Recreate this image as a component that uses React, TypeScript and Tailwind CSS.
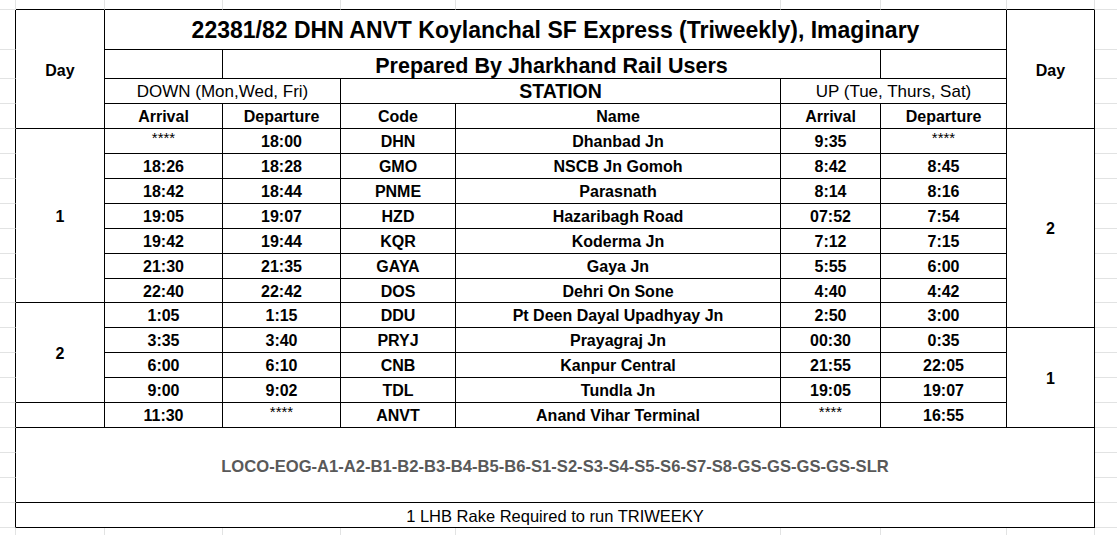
import React from 'react';

type Stop = {
  downArr: string;
  downDep: string;
  code: string;
  name: string;
  upArr: string;
  upDep: string;
};

const stops: Stop[] = [
  { downArr: '****', downDep: '18:00', code: 'DHN', name: 'Dhanbad Jn', upArr: '9:35', upDep: '****' },
  { downArr: '18:26', downDep: '18:28', code: 'GMO', name: 'NSCB Jn Gomoh', upArr: '8:42', upDep: '8:45' },
  { downArr: '18:42', downDep: '18:44', code: 'PNME', name: 'Parasnath', upArr: '8:14', upDep: '8:16' },
  { downArr: '19:05', downDep: '19:07', code: 'HZD', name: 'Hazaribagh Road', upArr: '07:52', upDep: '7:54' },
  { downArr: '19:42', downDep: '19:44', code: 'KQR', name: 'Koderma Jn', upArr: '7:12', upDep: '7:15' },
  { downArr: '21:30', downDep: '21:35', code: 'GAYA', name: 'Gaya Jn', upArr: '5:55', upDep: '6:00' },
  { downArr: '22:40', downDep: '22:42', code: 'DOS', name: 'Dehri On Sone', upArr: '4:40', upDep: '4:42' },
  { downArr: '1:05', downDep: '1:15', code: 'DDU', name: 'Pt Deen Dayal Upadhyay Jn', upArr: '2:50', upDep: '3:00' },
  { downArr: '3:35', downDep: '3:40', code: 'PRYJ', name: 'Prayagraj Jn', upArr: '00:30', upDep: '0:35' },
  { downArr: '6:00', downDep: '6:10', code: 'CNB', name: 'Kanpur Central', upArr: '21:55', upDep: '22:05' },
  { downArr: '9:00', downDep: '9:02', code: 'TDL', name: 'Tundla Jn', upArr: '19:05', upDep: '19:07' },
  { downArr: '11:30', downDep: '****', code: 'ANVT', name: 'Anand Vihar Terminal', upArr: '****', upDep: '16:55' },
];

const cell = 'flex items-center justify-center border-r border-b border-black bg-white';
const stripL = 'border-r border-b border-r-black border-b-[#e2e3e3]';
const stripR = 'border-b border-[#e2e3e3]';

function Cell({ className = 'pt-[2px]', children }: { className?: string; children?: React.ReactNode }) {
  return <div className={`${cell} ${className}`}>{children}</div>;
}

function Time({ value }: { value: string }) {
  if (value === '****') {
    return <span className="font-normal text-[15px] leading-none -mt-[9px]">****</span>;
  }
  return <span>{value}</span>;
}

export default function App() {
  return (
    <div className="h-[535px] w-full bg-white font-['Liberation_Sans',Arial,sans-serif] text-black text-[16px] font-bold overflow-hidden">
      <div className="grid h-full grid-cols-[16px_89px_118px_118px_115px_325px_100px_126px_88px_1fr] grid-rows-[10px_40px_29px_25px_25px_25px_25px_25px_25px_25px_25px_24px_25px_25px_25px_25px_25px_25px_25px_25px_25px_1fr]">
        {/* top strip of the sheet */}
        <div className="border-r border-b border-[#e2e3e3]" />
        {[0, 1, 2, 3, 4, 5, 6, 7].map((i) => (
          <div key={i} className="border-r border-b border-r-[#e2e3e3] border-b-black" />
        ))}
        <div className="border-b border-[#e2e3e3]" />

        {/* title row */}
        <div className={stripL} />
        <Cell className="row-span-4 pt-[3px]">Day</Cell>
        <Cell className="col-span-6 text-[23px] pt-[2px]">22381/82 DHN ANVT Koylanchal SF Express (Triweekly), Imaginary</Cell>
        <Cell className="row-span-4 pt-[3px]">Day</Cell>
        <div className={stripR} />

        {/* prepared by */}
        <div className={stripL} />
        <Cell />
        <Cell className="col-span-4 text-[21.5px] pt-[4px]">Prepared By Jharkhand Rail Users</Cell>
        <Cell />
        <div className={stripR} />

        {/* direction row */}
        <div className={stripL} />
        <Cell className="col-span-2 font-normal text-[17px] pt-[2px]">DOWN (Mon,Wed, Fri)</Cell>
        <Cell className="col-span-2 text-[19.5px] pt-[2px]">STATION</Cell>
        <Cell className="col-span-2 font-normal text-[17px] pt-[2px]">UP (Tue, Thurs, Sat)</Cell>
        <div className={stripR} />

        {/* column headers */}
        <div className={stripL} />
        <Cell>Arrival</Cell>
        <Cell>Departure</Cell>
        <Cell>Code</Cell>
        <Cell>Name</Cell>
        <Cell>Arrival</Cell>
        <Cell>Departure</Cell>
        <div className={stripR} />

        {stops.map((s, i) => (
          <React.Fragment key={s.code}>
            <div className={stripL} />
            {i === 0 && <Cell className="row-span-7 pt-[2px]">1</Cell>}
            {i === 7 && <Cell className="row-span-4 pt-[2px]">2</Cell>}
            {i === 11 && <Cell />}
            <Cell><Time value={s.downArr} /></Cell>
            <Cell><Time value={s.downDep} /></Cell>
            <Cell>{s.code}</Cell>
            <Cell>{s.name}</Cell>
            <Cell><Time value={s.upArr} /></Cell>
            <Cell><Time value={s.upDep} /></Cell>
            {i === 0 && <Cell className="row-span-8 pt-[2px]">2</Cell>}
            {i === 8 && <Cell className="row-span-4 pt-[2px]">1</Cell>}
            <div className={stripR} />
          </React.Fragment>
        ))}

        {/* rake composition */}
        <div className={stripL} />
        <Cell className="col-span-8 row-span-3 text-[16.6px] text-[#595959] pt-[4px]">
          LOCO-EOG-A1-A2-B1-B2-B3-B4-B5-B6-S1-S2-S3-S4-S5-S6-S7-S8-GS-GS-GS-GS-SLR
        </Cell>
        <div className={stripR} />
        <div className={stripL} />
        <div className={stripR} />
        <div className={stripL} />
        <div className={stripR} />

        {/* footer */}
        <div className={stripL} />
        <Cell className="col-span-8 font-normal text-[16.5px] pt-[3px]">1 LHB Rake Required to run TRIWEEKY</Cell>
        <div className={stripR} />

        {/* bottom strip */}
        {[0, 1, 2, 3, 4, 5, 6, 7, 8].map((i) => (
          <div key={i} className="border-r border-[#e2e3e3]" />
        ))}
        <div />
      </div>
    </div>
  );
}
